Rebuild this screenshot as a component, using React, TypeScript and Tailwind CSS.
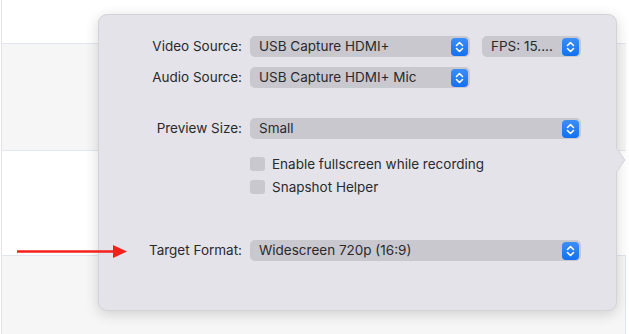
import type { ReactNode } from 'react';

const FONT = { fontFamily: 'Inter, "Liberation Sans", Arial, sans-serif' };

function Stepper() {
  return (
    <span className="flex h-[18px] w-[17px] shrink-0 items-center justify-center rounded-[4px] bg-gradient-to-b from-[#3b8ef7] to-[#1170f0]">
      <svg width="9" height="12" viewBox="0 0 9 12" fill="none" aria-hidden>
        <path d="M1.5 4.5 L4.5 1.5 L7.5 4.5" stroke="white" strokeWidth="1.6" strokeLinecap="round" strokeLinejoin="round" />
        <path d="M1.5 7.5 L4.5 10.5 L7.5 7.5" stroke="white" strokeWidth="1.6" strokeLinecap="round" strokeLinejoin="round" />
      </svg>
    </span>
  );
}

function Popup({ value, width }: { value: string; width: string }) {
  return (
    <div className={`flex h-[21px] items-center justify-between rounded-[5px] bg-[#c9c8ce] pl-[9px] pr-[2px] ${width}`}>
      <span className="whitespace-nowrap text-[13.5px] leading-[17px] text-[#2a2a2c]">{value}</span>
      <Stepper />
    </div>
  );
}

function Row({ label, children, className = '' }: { label: string; children: ReactNode; className?: string }) {
  return (
    <div className={`flex h-[21px] items-center ${className}`}>
      <span className="w-[143px] shrink-0 text-right text-[13.5px] leading-[17px] text-[#2a2a2c]">{label}</span>
      <div className="ml-[8px] flex items-center gap-[12px]">{children}</div>
    </div>
  );
}

function Check({ label, className = '' }: { label: string; className?: string }) {
  return (
    <div className={`ml-[151px] flex h-[14px] items-center gap-[7px] ${className}`}>
      <span className="h-[14px] w-[15px] shrink-0 rounded-[3px] bg-[#c9c8ce]" />
      <span className="whitespace-nowrap text-[13.5px] leading-[17px] text-[#2a2a2c]">{label}</span>
    </div>
  );
}

export default function App() {
  return (
    <div className="relative h-[334px] w-[629px] overflow-hidden bg-white" style={FONT}>
      {/* page behind the popover */}
      <div className="ml-[1px] mr-[3px] flex h-full flex-col border-l border-[#e3e3e6]">
        <div className="h-[43px] shrink-0 bg-white" />
        <div className="h-[108px] shrink-0 border-y border-[#e1e6ef] bg-[#f6f6f7]" />
        <div className="h-[104px] shrink-0 bg-white" />
        <div className="flex-1 border-t border-r border-[#e1e6ef] bg-[#f6f6f7]" />
      </div>

      {/* popover */}
      <div className="absolute left-[98px] top-[14px] h-[297px] w-[519px] rounded-[9px] border border-[#d3d2d7] bg-[#e4e3e9] shadow-[0_3px_14px_rgba(0,0,0,0.16)]">
        <svg className="absolute left-[517px] top-[133px]" width="10" height="24" viewBox="0 0 10 24" aria-hidden>
          <path d="M0 0 C2 2 3 3 4 5 L9 12 L4 19 C3 21 2 22 0 24 Z" fill="#e4e3e9" />
          <path d="M0 0 C2 2 3 3 4 5 L9 12 L4 19 C3 21 2 22 0 24" fill="none" stroke="#d3d2d7" strokeWidth="1" />
        </svg>

        <div className="flex flex-col pt-[21px]">
          <Row label="Video Source:">
            <Popup value="USB Capture HDMI+" width="w-[220px]" />
            <Popup value="FPS: 15...." width="w-[99px]" />
          </Row>
          <Row label="Audio Source:" className="mt-[10px]">
            <Popup value="USB Capture HDMI+ Mic" width="w-[220px]" />
          </Row>
          <Row label="Preview Size:" className="mt-[30px]">
            <Popup value="Small" width="w-[331px]" />
          </Row>
          <Check label="Enable fullscreen while recording" className="mt-[18px]" />
          <Check label="Snapshot Helper" className="mt-[9px]" />
          <Row label="Target Format:" className="mt-[46px]">
            <Popup value="Widescreen 720p (16:9)" width="w-[331px]" />
          </Row>
        </div>
      </div>

      {/* annotation arrow */}
      <svg className="absolute left-[16px] top-[244px]" width="112" height="15" viewBox="0 0 112 15" aria-hidden>
        <line x1="1" y1="7.5" x2="100" y2="7.5" stroke="#f5201a" strokeWidth="2.6" />
        <path d="M97 1 L111 7.5 L97 14 Z" fill="#f5201a" />
      </svg>
    </div>
  );
}
